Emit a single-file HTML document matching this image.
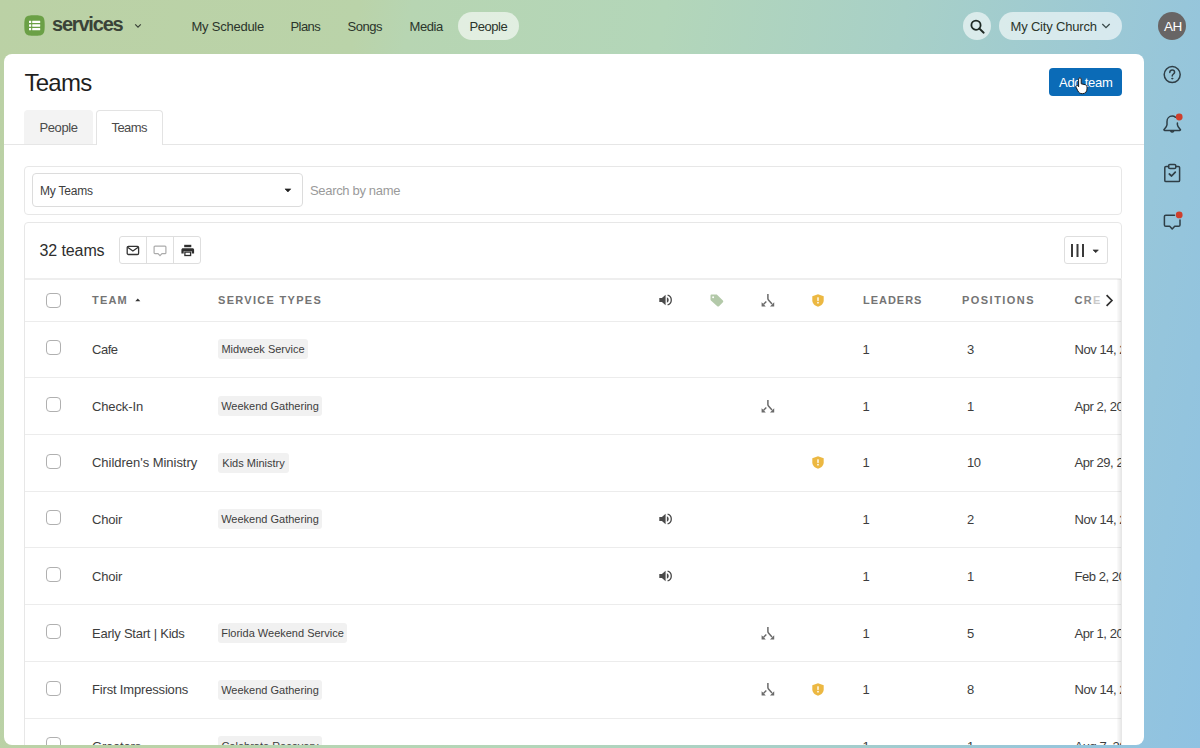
<!DOCTYPE html>
<html lang="en">
<head>
<meta charset="utf-8">
<title>Teams - Services</title>
<style>
*{box-sizing:border-box;margin:0;padding:0}
html,body{width:1200px;height:748px;overflow:hidden}
body{font-family:"Liberation Sans",Arial,sans-serif;color:#3d3d3d;position:relative;
background:linear-gradient(100deg,#bbd1a5 0%,#bad3a9 27%,#b7d5b2 31%,#b3d6b9 50%,#a8d0c7 68%,#97c6da 89%,#8fc2e2 100%)}
.abs{position:absolute}
.t{position:absolute;white-space:nowrap;line-height:1}
.nav .t{font-size:13px;color:#2b352b;top:19.5px}
.pill{position:absolute;background:rgba(255,255,255,.6);border-radius:14px;height:28px;top:12px}
.card{position:absolute;left:3.5px;top:53.7px;width:1140.3px;height:691.6px;background:#fff;border-radius:8px;overflow:hidden}
.inner{position:absolute;left:-3.5px;top:-53.7px;width:1200px;height:748px}
.box{position:absolute;border:1px solid #e7e7e7;border-radius:4px;background:#fff}
.hl{position:absolute;height:1px;background:#ececec;left:25px;width:1096px}
.cb{position:absolute;width:15px;height:15px;border:1px solid #b0b0b0;border-radius:4px;background:#fff;left:46px}
.name{font-size:13px;color:#3d3d3d;left:92px}
.tag{position:absolute;left:218px;height:20px;background:#f1f1f1;border-radius:3px;font-size:11px;color:#3d3d3d;line-height:20px;text-align:center;white-space:nowrap}
.num{font-size:13px;color:#3d3d3d}
.th{font-size:11px;font-weight:bold;color:#747474;top:294.5px}
.clip{position:absolute;left:24px;top:222px;width:1097px;height:523px;overflow:hidden}
.clip2{position:absolute;left:0;top:0;width:1200px;height:745px;overflow:hidden}
</style>
</head>
<body>
<div class="nav">
  <svg class="abs" style="left:24px;top:15px" width="21" height="21" viewBox="0 0 21 21"><path d="M10.5 0.3C15.4 0.3 17.6 0.7 19 2.1 20.3 3.5 20.7 5.6 20.7 10.5S20.3 17.5 19 18.9C17.6 20.3 15.4 20.7 10.5 20.7S3.4 20.3 2 18.9C.7 17.5.3 15.4.3 10.5S.7 3.5 2 2.1C3.4.7 5.6.3 10.5.3z" fill="#6ba046"/><g fill="#fff"><rect x="5" y="5.8" width="2.2" height="2.3" rx=".3"/><rect x="8.2" y="5.8" width="8" height="2.3" rx=".3"/><rect x="5" y="9.35" width="2.2" height="2.3" rx=".3"/><rect x="8.2" y="9.35" width="8" height="2.3" rx=".3"/><rect x="5" y="12.9" width="2.2" height="2.3" rx=".3"/><rect x="8.2" y="12.9" width="8" height="2.3" rx=".3"/></g></svg>
  <div class="t" style="left:52px;top:14px;font-size:20px;font-weight:bold;color:#3a4238;letter-spacing:-1.2px">services</div>
  <svg class="abs" style="left:134px;top:23px" width="8" height="6" viewBox="0 0 8 6"><path d="M1.2 1.4L4 4.2 6.8 1.4" fill="none" stroke="#3a4238" stroke-width="1.2"/></svg>
  <div class="t" style="left:191.5px;letter-spacing:-.24px">My Schedule</div>
  <div class="t" style="left:290.5px;letter-spacing:-.56px">Plans</div>
  <div class="t" style="left:347.5px;letter-spacing:-.44px">Songs</div>
  <div class="t" style="left:409.5px;letter-spacing:-.44px">Media</div>
  <div class="pill" style="left:458px;width:61px"></div>
  <div class="t" style="left:469.5px;letter-spacing:-.45px">People</div>
  <div class="pill" style="left:963px;width:28px"></div>
  <svg class="abs" style="left:969px;top:18px" width="17" height="17" viewBox="0 0 17 17"><circle cx="7" cy="7.2" r="4.6" fill="none" stroke="#1f2a24" stroke-width="1.8"/><path d="M10.3 10.5L14.7 14.7" stroke="#1f2a24" stroke-width="1.9" stroke-linecap="round"/></svg>
  <div class="pill" style="left:999px;width:123px"></div>
  <div class="t" style="left:1010.5px;letter-spacing:-.18px">My City Church</div>
  <svg class="abs" style="left:1101px;top:22px" width="10" height="8" viewBox="0 0 10 8"><path d="M1.3 2L5 5.7 8.7 2" fill="none" stroke="#3a4a4a" stroke-width="1.3"/></svg>
  <div class="abs" style="left:1158px;top:12px;width:28px;height:28px;border-radius:14px;background:#686565"></div>
  <div class="t" style="left:1164px;top:19.5px;font-size:13.5px;color:#fff;letter-spacing:-.6px">AH</div>
</div>
<svg class="abs" style="left:1160px;top:62px" width="26" height="172" viewBox="0 0 26 172" fill="none" stroke="#2f3e46" stroke-width="1.5" stroke-linejoin="round" stroke-linecap="round">
<circle cx="12.2" cy="12.6" r="8"/>
<path d="M9.8 10.4c0-1.5 1.1-2.4 2.4-2.4s2.4.9 2.4 2.2c0 1.8-2.4 1.9-2.4 3.9"/><circle cx="12.2" cy="16.6" r=".6" fill="#2f3e46" stroke-width=".8"/>
<path d="M15.6 55.3C14.6 54.5 13.5 54.1 12.2 54.1 9.1 54.1 7 56.5 7 59.5v3.3c0 1.6-1.3 2.9-2.9 4.6-.4.4-.1 1 .4 1h15.4c.5 0 .8-.6.4-1-1.6-1.7-2.9-3-2.9-4.6v-1.8"/>
<path d="M10.8 69.2c.3.6.8.9 1.4.9s1.1-.3 1.4-.9"/>
<circle cx="19.2" cy="55" r="3.4" fill="#cf3f2c" stroke="none"/>
<path d="M8.6 104.4H6c-.7 0-1.2.5-1.2 1.2v12.8c0 .7.5 1.2 1.2 1.2h12.4c.7 0 1.2-.5 1.2-1.2v-12.8c0-.7-.5-1.2-1.2-1.2h-2.6"/>
<rect x="8.6" y="102.5" width="7.2" height="4" rx="1.3"/>
<path d="M9.3 112l2.3 2 3.7-3.9" stroke-width="1.7"/>
<path d="M14.5 153.2H5.8c-.8 0-1.4.6-1.4 1.4v8.3c0 .8.6 1.4 1.4 1.4h3.9l2.5 2.7 2.5-2.7h3.9c.8 0 1.4-.6 1.4-1.4v-4.8"/>
<circle cx="19.2" cy="152.9" r="3.4" fill="#cf3f2c" stroke="none"/>
</svg>
<div class="card"><div class="inner">
<div class="t" style="left:24.5px;top:71px;font-size:24px;color:#1f1f1f;letter-spacing:-.75px">Teams</div>
<div class="abs" style="left:1049px;top:68px;width:73px;height:28px;border-radius:4px;background:#0b6bb7"></div>
<div class="t" style="left:1059px;top:76px;font-size:13px;color:#fff;letter-spacing:-.27px">Add team</div>
<svg class="abs" style="left:1074px;top:76px" width="16" height="20" viewBox="0 0 16 20"><path d="M4.6 3.2c0-.9.6-1.4 1.3-1.4s1.3.5 1.3 1.4v4.6l4 .9c1.1.3 1.8 1.1 1.8 2.4v1.8c0 2.7-1.7 4.8-4.6 4.8-2.3 0-3.6-1-4.6-2.9L2.2 11.5c-.5-.9-.2-1.6.3-1.9.6-.3 1.3-.1 1.7.5l.4.7z" fill="#fff" stroke="#1a1a1a" stroke-width="1"/></svg>
<div class="abs" style="left:4px;top:144px;width:1140px;height:1px;background:#e6e6e6"></div>
<div class="abs" style="left:24px;top:110px;width:69px;height:34px;background:#f3f3f3;border-radius:4px 4px 0 0"></div>
<div class="t" style="left:39.5px;top:121px;font-size:13px;color:#4a4a4a;letter-spacing:-.41px">People</div>
<div class="abs" style="left:96px;top:110px;width:67px;height:35px;background:#fff;border:1px solid #e3e3e3;border-bottom:none;border-radius:4px 4px 0 0"></div>
<div class="t" style="left:111.5px;top:121px;font-size:13px;color:#4a4a4a;letter-spacing:-.56px">Teams</div>
<div class="box" style="left:24px;top:166px;width:1098px;height:49px"></div>
<div class="box" style="left:32px;top:173px;width:271px;height:34px;border-color:#dcdcdc"></div>
<div class="t" style="left:40px;top:184.5px;font-size:12px;color:#3d3d3d;letter-spacing:-.22px">My Teams</div>
<svg class="abs" style="left:284px;top:188px" width="8" height="5" viewBox="0 0 8 5"><path d="M1 .9h5.8L3.9 4z" fill="#222" stroke="#222" stroke-width=".6" stroke-linejoin="round"/></svg>
<div class="t" style="left:310px;top:184px;font-size:13px;color:#9a9a9a;letter-spacing:-.33px">Search by name</div>
<div class="box" style="left:24px;top:222px;width:1098px;height:560px;border-radius:4px 4px 0 0"></div>
<div class="t" style="left:39.5px;top:243px;font-size:16px;color:#2e2e2e;letter-spacing:-.1px">32 teams</div>
<div class="box" style="left:119px;top:236px;width:82px;height:28px;border-radius:3px;border-color:#dedede"></div>
<div class="abs" style="left:146px;top:237px;width:1px;height:26px;background:#dedede"></div><div class="abs" style="left:173px;top:237px;width:1px;height:26px;background:#dedede"></div>
<svg class="abs" style="left:126px;top:245px" width="14" height="11" viewBox="0 0 14 11"><rect x="1.2" y="1.3" width="11.4" height="8.2" rx="1.2" fill="none" stroke="#333" stroke-width="1.3"/><path d="M1.6 2.2L6.9 6l5.3-3.8" fill="none" stroke="#333" stroke-width="1.3"/></svg>
<svg class="abs" style="left:153px;top:244.5px" width="14" height="12" viewBox="0 0 14 12"><path d="M2 1.2h10c.5 0 .9.4.9.9v5.6c0 .5-.4.9-.9.9H9L7 10.6 5 8.6H2c-.5 0-.9-.4-.9-.9V2.1c0-.5.4-.9.9-.9z" fill="none" stroke="#ababab" stroke-width="1.2"/></svg>
<svg class="abs" style="left:180.5px;top:244px" width="14" height="13" viewBox="0 0 14 13"><rect x="3.2" y=".8" width="7.1" height="2.4" fill="#2f2f2f"/><path d="M2 4.2h9.5c.9 0 1.6.7 1.6 1.6v3.6h-2.3V7.2H2.7v2.2H.4V5.8c0-.9.7-1.6 1.6-1.6z" fill="#2f2f2f"/><rect x="3.9" y="8.1" width="5.7" height="3.4" fill="#fff" stroke="#2f2f2f" stroke-width="1.3"/></svg>
<div class="box" style="left:1064px;top:236px;width:44px;height:28px;border-radius:3px;border-color:#dedede"></div>
<div class="abs" style="left:1070.5px;top:244px;width:2px;height:12.5px;background:#3a3a3a;box-shadow:5.5px 0 0 #3a3a3a,11px 0 0 #3a3a3a"></div>
<svg class="abs" style="left:1092px;top:248.5px" width="8" height="5" viewBox="0 0 8 5"><path d="M1 .9h5.4L3.7 3.7z" fill="#333" stroke="#333" stroke-width=".6" stroke-linejoin="round"/></svg>
<div class="abs" style="left:25px;top:278px;width:1097px;height:2px;background:#eeeeee"></div>
<div class="cb" style="top:293px"></div>
<div class="t th" style="left:92px;letter-spacing:1.2px">TEAM</div>
<svg class="abs" style="left:135px;top:298px" width="6" height="4" viewBox="0 0 6 4"><path d="M.3 3.3L2.8.5l2.5 2.8z" fill="#333"/></svg>
<div class="t th" style="left:218px;letter-spacing:1.3px">SERVICE TYPES</div>
<svg class="abs" style="left:658.5px;top:294px" width="14" height="12" viewBox="0 0 14 12"><path d="M0.3 3.9h2.6L6.6 0.8v10.4L2.9 8.1H0.3z" fill="#4a4a4a"/><path d="M7.9 3.3a2.9 2.9 0 0 1 0 5.4z" fill="#4a4a4a"/><path d="M8.6 1.1a5.1 5.1 0 0 1 0 9.8" fill="none" stroke="#4a4a4a" stroke-width="1.3"/></svg>
<svg class="abs" style="left:709.5px;top:293.5px" width="14" height="13" viewBox="0 0 14 13"><path d="M1.3.6h5c.4 0 .7.1 1 .4l5.6 5.6c.5.5.5 1.2 0 1.7l-3.9 3.9c-.5.5-1.2.5-1.7 0L.9 6.6C.6 6.3.5 6 .5 5.6V1.4C.5.9.8.6 1.3.6z" fill="#b3c9a9"/><circle cx="3.1" cy="3.2" r="1" fill="#fff"/></svg>
<svg class="abs" style="left:760.5px;top:294px" width="14" height="13" viewBox="0 0 14 13"><path d="M6.9 0v4.6c0 .6.2 1 .6 1.5l3.5 3.9" fill="none" stroke="#6a6a6a" stroke-width="1.5"/><path d="M5.3 7.5L2.6 10.3" fill="none" stroke="#6a6a6a" stroke-width="1.4"/><path d="M0.6 12.4V8.2l4.2 4.2zM13.2 12.4V8.2L9 12.4z" fill="#6a6a6a"/></svg>
<svg class="abs" style="left:812px;top:294px" width="12" height="13" viewBox="0 0 12 13"><path d="M6 0.2L11.7 2.3v3.9c0 3.3-2.6 5.6-5.7 6.5C2.9 11.8.3 9.5.3 6.2V2.3z" fill="#ecb842"/><rect x="5.3" y="3.2" width="1.4" height="3.7" rx=".4" fill="#fff"/><circle cx="6" cy="8.7" r=".85" fill="#fff"/></svg>
<div class="t th" style="left:863px;letter-spacing:.97px">LEADERS</div>
<div class="t th" style="left:962px;letter-spacing:1.46px">POSITIONS</div>
<div class="t th" style="left:1074.5px;letter-spacing:1.3px;color:#6f6f6f">C<span style="color:#8a8a8a">R</span><span style="color:#c9c9c9">E</span></div>
<svg class="abs" style="left:1104px;top:293px" width="11" height="15" viewBox="0 0 11 15"><path d="M2.6 2.2l5.3 5.3-5.3 5.3" fill="none" stroke="#2f2f2f" stroke-width="1.7"/></svg>
<div class="clip2">
<div class="hl" style="top:321px"></div>
<div class="cb" style="top:340px"></div>
<div class="t name" style="top:343px;letter-spacing:-0.47px">Cafe</div>
<div class="tag" style="top:339px;width:90px">Midweek Service</div>
<div class="t num" style="left:862.5px;top:343px">1</div>
<div class="t num" style="left:967px;top:343px;letter-spacing:-.6px">3</div>
<div class="hl" style="top:377px"></div>
<div class="cb" style="top:397px"></div>
<div class="t name" style="top:400px;letter-spacing:-0.13px">Check-In</div>
<div class="tag" style="top:396px;width:104px">Weekend Gathering</div>
<svg class="abs" style="left:760.5px;top:399.5px" width="14" height="13" viewBox="0 0 14 13"><path d="M6.9 0v4.6c0 .6.2 1 .6 1.5l3.5 3.9" fill="none" stroke="#6a6a6a" stroke-width="1.5"/><path d="M5.3 7.5L2.6 10.3" fill="none" stroke="#6a6a6a" stroke-width="1.4"/><path d="M0.6 12.4V8.2l4.2 4.2zM13.2 12.4V8.2L9 12.4z" fill="#6a6a6a"/></svg>
<div class="t num" style="left:862.5px;top:400px">1</div>
<div class="t num" style="left:967px;top:400px;letter-spacing:-.6px">1</div>
<div class="hl" style="top:434px"></div>
<div class="cb" style="top:454px"></div>
<div class="t name" style="top:456px;letter-spacing:-0.03px">Children's Ministry</div>
<div class="tag" style="top:453px;width:71px">Kids Ministry</div>
<svg class="abs" style="left:812px;top:456.25px" width="12" height="13" viewBox="0 0 12 13"><path d="M6 0.2L11.7 2.3v3.9c0 3.3-2.6 5.6-5.7 6.5C2.9 11.8.3 9.5.3 6.2V2.3z" fill="#ecb842"/><rect x="5.3" y="3.2" width="1.4" height="3.7" rx=".4" fill="#fff"/><circle cx="6" cy="8.7" r=".85" fill="#fff"/></svg>
<div class="t num" style="left:862.5px;top:456px">1</div>
<div class="t num" style="left:967px;top:456px;letter-spacing:-.6px">10</div>
<div class="hl" style="top:491px"></div>
<div class="cb" style="top:510px"></div>
<div class="t name" style="top:513px;letter-spacing:-0.2px">Choir</div>
<div class="tag" style="top:509px;width:104px">Weekend Gathering</div>
<svg class="abs" style="left:658.5px;top:513px" width="14" height="12" viewBox="0 0 14 12"><path d="M0.3 3.9h2.6L6.6 0.8v10.4L2.9 8.1H0.3z" fill="#4a4a4a"/><path d="M7.9 3.3a2.9 2.9 0 0 1 0 5.4z" fill="#4a4a4a"/><path d="M8.6 1.1a5.1 5.1 0 0 1 0 9.8" fill="none" stroke="#4a4a4a" stroke-width="1.3"/></svg>
<div class="t num" style="left:862.5px;top:513px">1</div>
<div class="t num" style="left:967px;top:513px;letter-spacing:-.6px">2</div>
<div class="hl" style="top:547px"></div>
<div class="cb" style="top:567px"></div>
<div class="t name" style="top:570px;letter-spacing:-0.2px">Choir</div>
<svg class="abs" style="left:658.5px;top:569.75px" width="14" height="12" viewBox="0 0 14 12"><path d="M0.3 3.9h2.6L6.6 0.8v10.4L2.9 8.1H0.3z" fill="#4a4a4a"/><path d="M7.9 3.3a2.9 2.9 0 0 1 0 5.4z" fill="#4a4a4a"/><path d="M8.6 1.1a5.1 5.1 0 0 1 0 9.8" fill="none" stroke="#4a4a4a" stroke-width="1.3"/></svg>
<div class="t num" style="left:862.5px;top:570px">1</div>
<div class="t num" style="left:967px;top:570px;letter-spacing:-.6px">1</div>
<div class="hl" style="top:604px"></div>
<div class="cb" style="top:624px"></div>
<div class="t name" style="top:627px;letter-spacing:-0.22px">Early Start | Kids</div>
<div class="tag" style="top:623px;width:129px">Florida Weekend Service</div>
<svg class="abs" style="left:760.5px;top:626.5px" width="14" height="13" viewBox="0 0 14 13"><path d="M6.9 0v4.6c0 .6.2 1 .6 1.5l3.5 3.9" fill="none" stroke="#6a6a6a" stroke-width="1.5"/><path d="M5.3 7.5L2.6 10.3" fill="none" stroke="#6a6a6a" stroke-width="1.4"/><path d="M0.6 12.4V8.2l4.2 4.2zM13.2 12.4V8.2L9 12.4z" fill="#6a6a6a"/></svg>
<div class="t num" style="left:862.5px;top:627px">1</div>
<div class="t num" style="left:967px;top:627px;letter-spacing:-.6px">5</div>
<div class="hl" style="top:661px"></div>
<div class="cb" style="top:681px"></div>
<div class="t name" style="top:683px;letter-spacing:-0.17px">First Impressions</div>
<div class="tag" style="top:680px;width:104px">Weekend Gathering</div>
<svg class="abs" style="left:760.5px;top:683.25px" width="14" height="13" viewBox="0 0 14 13"><path d="M6.9 0v4.6c0 .6.2 1 .6 1.5l3.5 3.9" fill="none" stroke="#6a6a6a" stroke-width="1.5"/><path d="M5.3 7.5L2.6 10.3" fill="none" stroke="#6a6a6a" stroke-width="1.4"/><path d="M0.6 12.4V8.2l4.2 4.2zM13.2 12.4V8.2L9 12.4z" fill="#6a6a6a"/></svg>
<svg class="abs" style="left:812px;top:683.25px" width="12" height="13" viewBox="0 0 12 13"><path d="M6 0.2L11.7 2.3v3.9c0 3.3-2.6 5.6-5.7 6.5C2.9 11.8.3 9.5.3 6.2V2.3z" fill="#ecb842"/><rect x="5.3" y="3.2" width="1.4" height="3.7" rx=".4" fill="#fff"/><circle cx="6" cy="8.7" r=".85" fill="#fff"/></svg>
<div class="t num" style="left:862.5px;top:683px">1</div>
<div class="t num" style="left:967px;top:683px;letter-spacing:-.6px">8</div>
<div class="hl" style="top:718px"></div>
<div class="cb" style="top:737px"></div>
<div class="t name" style="top:740px;letter-spacing:-0.2px">Greeters</div>
<div class="tag" style="top:736px;width:104px">Celebrate Recovery</div>
<div class="t num" style="left:862.5px;top:740px">1</div>
<div class="t num" style="left:967px;top:740px;letter-spacing:-.6px">1</div>
</div>
<div class="clip">
<div class="t num" style="left:1050.5px;top:121px;letter-spacing:-.45px">Nov 14, 2023</div>
<div class="t num" style="left:1050.5px;top:178px;letter-spacing:-.45px">Apr 2, 2024</div>
<div class="t num" style="left:1050.5px;top:234px;letter-spacing:-.45px">Apr 29, 2024</div>
<div class="t num" style="left:1050.5px;top:291px;letter-spacing:-.45px">Nov 14, 2023</div>
<div class="t num" style="left:1050.5px;top:348px;letter-spacing:-.45px">Feb 2, 2024</div>
<div class="t num" style="left:1050.5px;top:405px;letter-spacing:-.45px">Apr 1, 2024</div>
<div class="t num" style="left:1050.5px;top:461px;letter-spacing:-.45px">Nov 14, 2023</div>
<div class="t num" style="left:1050.5px;top:518px;letter-spacing:-.45px">Aug 7, 2024</div>
</div>
<div class="abs" style="left:1117px;top:279px;width:4px;height:466px;background:linear-gradient(90deg,rgba(0,0,0,.015),rgba(0,0,0,.085))"></div>
</div></div>
</body>
</html>
